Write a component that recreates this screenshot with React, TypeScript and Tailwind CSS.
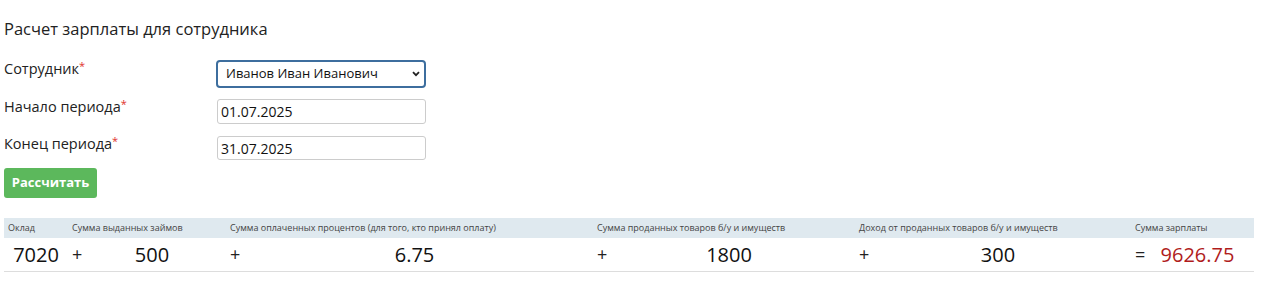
import React from 'react';

const font = { fontFamily: '"Open Sans", "Noto Sans", sans-serif' };

// Form row with label and control
const FormRow = ({ label, children, className = "" }) => (
  <div className={`flex items-start ${className}`}>
    <label className="w-[212px] text-[14.5px] text-[#222] leading-5 -mt-[3px]">
      {label}
      <span className="text-[#e0322d] text-[11px] align-top relative -top-[3px]">*</span>
    </label>
    {children}
  </div>
);

const columns = [
  { title: "Оклад", value: "7020", w: "w-[64px]" },
  { title: "Сумма выданных займов", value: "500", sign: "+", w: "w-[158px]" },
  { title: "Сумма оплаченных процентов (для того, кто принял оплату)", value: "6.75", sign: "+", w: "w-[367px]" },
  { title: "Сумма проданных товаров б/у и имуществ", value: "1800", sign: "+", w: "w-[262px]" },
  { title: "Доход от проданных товаров б/у и имуществ", value: "300", sign: "+", w: "w-[276px]" },
  { title: "Сумма зарплаты", value: "9626.75", sign: "=", w: "w-[123px]", total: true },
];

export default function App() {
  return (
    <div className="bg-white h-[295px] pl-1 pt-[17px] text-[#222]" style={font}>
      <h3 className="text-[16.5px] leading-6 mb-[21px]">Расчет зарплаты для сотрудника</h3>

      <FormRow label="Сотрудник" className="h-[38px]">
        <div className="relative w-[210px] h-[28px] -mt-[2px]">
          <select
            className="appearance-none w-full h-full border-2 border-[#3d6e9e] rounded-[4px] pl-[8px] text-[13px] font-medium text-[#111] bg-white outline-none"
            style={font}
            defaultValue="1"
          >
            <option value="1">Иванов Иван Иванович</option>
          </select>
          <svg className="absolute right-[6px] top-[11px] w-[8px] h-[6px] pointer-events-none" viewBox="0 0 8 6">
            <path d="M1 1.2 L4 4.2 L7 1.2" fill="none" stroke="#222" strokeWidth="1.8" />
          </svg>
        </div>
      </FormRow>

      <FormRow label="Начало периода" className="h-[37px]">
        <input
          className="w-[209px] h-[25px] border border-[#ccc] rounded-[3px] px-[3px] text-[14px] font-medium text-[#111] outline-none ml-[1px] -mt-[1px]"
          style={font}
          defaultValue="01.07.2025"
        />
      </FormRow>

      <FormRow label="Конец периода" className="h-[31px]">
        <input
          className="w-[209px] h-[24px] border border-[#ccc] rounded-[3px] px-[3px] text-[14px] font-medium text-[#111] outline-none ml-[1px] -mt-[1px]"
          style={font}
          defaultValue="31.07.2025"
        />
      </FormRow>

      <button
        className="bg-[#5cb85c] text-white font-bold text-[13px] rounded-[3px] w-[93px] h-[30px]"
        style={font}
      >
        Рассчитать
      </button>

      <div className="mt-[20px] w-[1250px] border-b border-[#ddd]">
        <div className="flex bg-[#dfe9ef] h-[20px]">
          {columns.map((c) => (
            <div key={c.title} className={`${c.w} px-[4px] text-[9px] leading-[20px] text-[#444] whitespace-nowrap`}>
              {c.title}
            </div>
          ))}
        </div>
        <div className="flex h-[33px] items-center">
          {columns.map((c) => (
            <div key={c.title} className={`${c.w} flex items-center px-[4px]`}>
              {c.sign && <span className="text-[18px] w-[10px] text-[#222]">{c.sign}</span>}
              <span
                className={`flex-1 text-center text-[20px] leading-[33px] ${c.total ? "text-[#b01c1c]" : "text-[#111]"}`}
              >
                {c.value}
              </span>
            </div>
          ))}
        </div>
      </div>
    </div>
  );
}
